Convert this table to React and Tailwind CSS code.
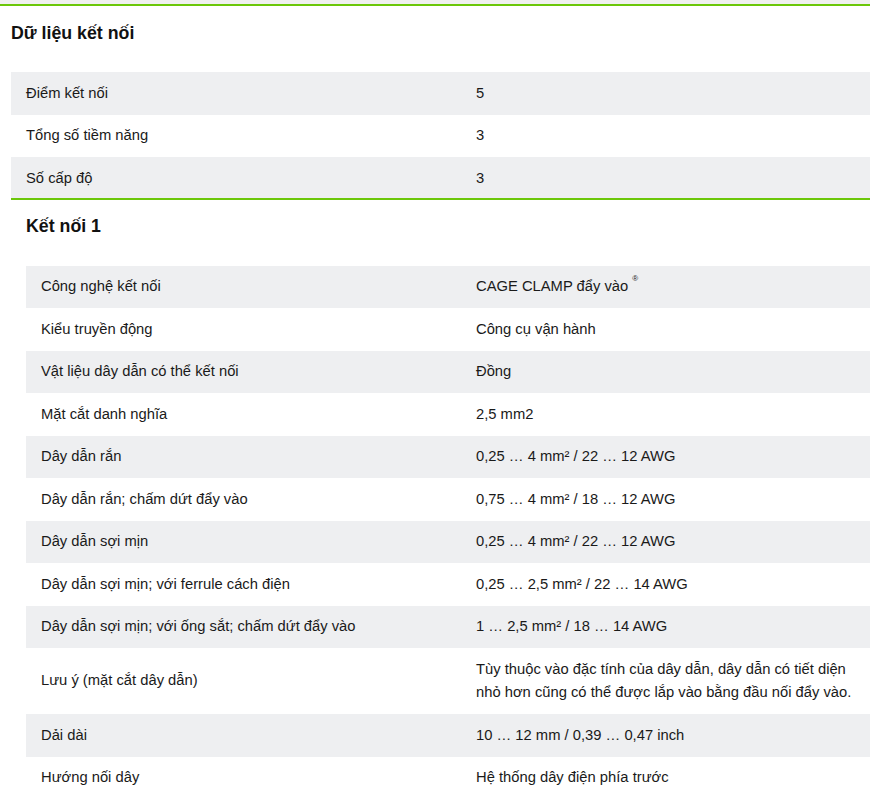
const summary = [
  ["Điểm kết nối", "5"],
  ["Tổng số tiềm năng", "3"],
  ["Số cấp độ", "3"],
];

const connection = [
  ["Công nghệ kết nối", <>CAGE CLAMP đẩy vào <sup className="text-[8px] align-[6px]">®</sup></>],
  ["Kiểu truyền động", "Công cụ vận hành"],
  ["Vật liệu dây dẫn có thể kết nối", "Đồng"],
  ["Mặt cắt danh nghĩa", "2,5 mm2"],
  ["Dây dẫn rắn", "0,25 … 4 mm² / 22 … 12 AWG"],
  ["Dây dẫn rắn; chấm dứt đẩy vào", "0,75 … 4 mm² / 18 … 12 AWG"],
  ["Dây dẫn sợi mịn", "0,25 … 4 mm² / 22 … 12 AWG"],
  ["Dây dẫn sợi mịn; với ferrule cách điện", "0,25 … 2,5 mm² / 22 … 14 AWG"],
  ["Dây dẫn sợi mịn; với ống sắt; chấm dứt đẩy vào", "1 … 2,5 mm² / 18 … 14 AWG"],
  ["Lưu ý (mặt cắt dây dẫn)", "Tùy thuộc vào đặc tính của dây dẫn, dây dẫn có tiết diện nhỏ hơn cũng có thể được lắp vào bằng đầu nối đẩy vào."],
  ["Dải dài", "10 … 12 mm / 0,39 … 0,47 inch"],
  ["Hướng nối dây", "Hệ thống dây điện phía trước"],
];

const DataTable = ({ rows, labelWidth }) => (
  <div>
    {rows.map(([label, value], i) => (
      <div
        key={i}
        className={`flex items-center ${i % 2 === 0 ? "bg-[#eeeff1]" : "bg-white"}`}
      >
        <div className="shrink-0 px-[15px] py-[9.5px]" style={{ width: labelWidth }}>
          {label}
        </div>
        <div className="flex-1 px-[15px] py-[9.5px] pr-2">{value}</div>
      </div>
    ))}
  </div>
);

export default function App() {
  return (
    <div
      className="min-h-screen bg-white text-[14.75px] leading-[23.5px] text-[#1a1a1a]"
      style={{ fontFamily: '"Liberation Sans", Arial, sans-serif' }}
    >
      <div className="h-[4px] bg-[#f0f0f0]" />
      <div className="h-[2px] bg-[#6cc70a]" />

      <section className="pl-[11px]">
        <h2 className="pt-[14px] pb-[25px] text-[17.75px] leading-[26px] font-bold text-[#111]">
          Dữ liệu kết nối
        </h2>
        <div className="mt-[1px]">
          <DataTable rows={summary} labelWidth={450} />
        </div>
        <div className="relative -mt-[2px] h-[2px] bg-[#6cc70a]" />

        <div className="pl-[15px]">
          <h3 className="pt-[13px] pb-[27px] text-[17.75px] leading-[26px] font-bold text-[#111]">
            Kết nối 1
          </h3>
          <DataTable rows={connection} labelWidth={435} />
        </div>
      </section>
    </div>
  );
}
